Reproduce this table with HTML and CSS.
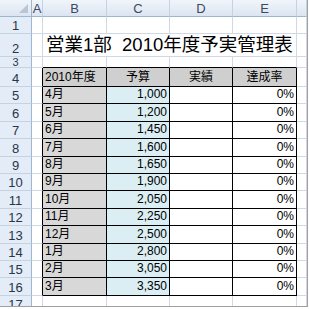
FILE: index.html
```html
<!DOCTYPE html>
<html lang="ja">
<head>
<meta charset="utf-8">
<link rel="stylesheet" href="styles.css">
</head>
<body>
<div class="sheet">
  <div class="ch corner"><span class="tri"></span></div>
  <div class="ch">A</div><div class="ch">B</div><div class="ch">C</div><div class="ch">D</div><div class="ch">E</div><div class="ch"></div>

  <div class="rh">1</div><div class="cell"></div><div class="cell"></div><div class="cell"></div><div class="cell"></div><div class="cell"></div><div class="cell"></div>

  <div class="rh">2</div><div class="cell"></div><div class="cell title">営業1部  2010年度予実管理表</div><div class="cell"></div>

  <div class="rh short">3</div><div class="cell"></div><div class="cell eb"></div><div class="cell eb"></div><div class="cell eb"></div><div class="cell eb"></div><div class="cell"></div>

  <div class="rh">4</div><div class="cell er"></div><div class="cell t hd">2010年度</div><div class="cell t hd c">予算</div><div class="cell t hd c">実績</div><div class="cell t hd c">達成率</div><div class="cell"></div>

  <div class="rh">5</div><div class="cell er"></div><div class="cell t mo">4月</div><div class="cell t amt">1,000</div><div class="cell t"></div><div class="cell t pct">0%</div><div class="cell"></div>
  <div class="rh">6</div><div class="cell er"></div><div class="cell t mo">5月</div><div class="cell t amt">1,200</div><div class="cell t"></div><div class="cell t pct">0%</div><div class="cell"></div>
  <div class="rh">7</div><div class="cell er"></div><div class="cell t mo">6月</div><div class="cell t amt">1,450</div><div class="cell t"></div><div class="cell t pct">0%</div><div class="cell"></div>
  <div class="rh">8</div><div class="cell er"></div><div class="cell t mo">7月</div><div class="cell t amt">1,600</div><div class="cell t"></div><div class="cell t pct">0%</div><div class="cell"></div>
  <div class="rh">9</div><div class="cell er"></div><div class="cell t mo">8月</div><div class="cell t amt">1,650</div><div class="cell t"></div><div class="cell t pct">0%</div><div class="cell"></div>
  <div class="rh">10</div><div class="cell er"></div><div class="cell t mo">9月</div><div class="cell t amt">1,900</div><div class="cell t"></div><div class="cell t pct">0%</div><div class="cell"></div>
  <div class="rh">11</div><div class="cell er"></div><div class="cell t mo">10月</div><div class="cell t amt">2,050</div><div class="cell t"></div><div class="cell t pct">0%</div><div class="cell"></div>
  <div class="rh">12</div><div class="cell er"></div><div class="cell t mo">11月</div><div class="cell t amt">2,250</div><div class="cell t"></div><div class="cell t pct">0%</div><div class="cell"></div>
  <div class="rh">13</div><div class="cell er"></div><div class="cell t mo">12月</div><div class="cell t amt">2,500</div><div class="cell t"></div><div class="cell t pct">0%</div><div class="cell"></div>
  <div class="rh">14</div><div class="cell er"></div><div class="cell t mo">1月</div><div class="cell t amt">2,800</div><div class="cell t"></div><div class="cell t pct">0%</div><div class="cell"></div>
  <div class="rh">15</div><div class="cell er"></div><div class="cell t mo">2月</div><div class="cell t amt">3,050</div><div class="cell t"></div><div class="cell t pct">0%</div><div class="cell"></div>
  <div class="rh">16</div><div class="cell er"></div><div class="cell t mo">3月</div><div class="cell t amt">3,350</div><div class="cell t"></div><div class="cell t pct">0%</div><div class="cell"></div>

  <div class="rh">17</div><div class="cell"></div><div class="cell"></div><div class="cell"></div><div class="cell"></div><div class="cell"></div><div class="cell"></div>
</div>
</body>
</html>
```

FILE: styles.css
```css
html, body {
  margin: 0;
  padding: 0;
  background: #ffffff;
}
body {
  width: 309px;
  height: 309px;
  overflow: hidden;
  font-family: "Liberation Sans", "Noto Sans CJK JP", sans-serif;
  font-size: 12px;
  color: #000;
}
.sheet {
  box-sizing: border-box;
  width: 308px;
  height: 307px;
  overflow: hidden;
  border-right: 1px solid #a0a0a0;
  border-bottom: 1px solid #a0a0a0;
  display: grid;
  grid-template-columns: 32px 11px 64px 63px 63px 64px 1fr;
  grid-template-rows: 17px 17px 23px 11px 19px repeat(12, 17.4px) 17px;
}
.ch {
  box-sizing: border-box;
  background: linear-gradient(#f1f5fb, #dbe5f1);
  border-right: 1px solid #c5d2e2;
  border-bottom: 1px solid #9eb6ce;
  color: #3b4a5e;
  display: flex;
  align-items: center;
  justify-content: center;
  font-size: 13px;
}
.corner {
  position: relative;
  border-right-color: #9eb6ce;
}
.tri {
  position: absolute;
  right: 3px;
  bottom: 3px;
  width: 0;
  height: 0;
  border-left: 9px solid transparent;
  border-bottom: 9px solid #b8c5d6;
}
.rh {
  box-sizing: border-box;
  background: #e4ecf7;
  border-right: 1px solid #9eb6ce;
  border-bottom: 1px solid #c5d2e2;
  color: #27364a;
  display: flex;
  align-items: flex-end;
  justify-content: center;
  font-size: 13px;
  line-height: 15px;
  overflow: hidden;
}
.rh.short {
  align-items: center;
  font-size: 11px;
  line-height: 10px;
}
.cell {
  box-sizing: border-box;
  border-right: 1px solid #d0d7e5;
  border-bottom: 1px solid #d0d7e5;
  display: flex;
  align-items: flex-end;
  padding: 0 2px 1px;
  line-height: 15px;
  white-space: nowrap;
  overflow: hidden;
}
.title {
  grid-column: span 4;
  border-right: 1px solid #d0d7e5;
  font-size: 18.5px;
  line-height: 22px;
  padding-left: 3px;
  padding-bottom: 0;
  white-space: pre;
}
.eb { border-bottom-color: #000; }
.er { border-right-color: #000; }
.t {
  border-right-color: #000;
  border-bottom-color: #000;
}
.hd { background: #cfcfcf; }
.c { justify-content: center; }
.mo { background: #d8d8d8; }
.amt {
  background: #daeef3;
  justify-content: flex-end;
}
.pct { justify-content: flex-end; }
```
